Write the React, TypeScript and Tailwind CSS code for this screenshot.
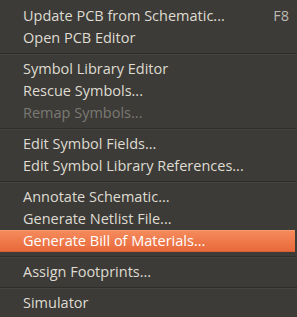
type Item = { label: string; shortcut?: string; disabled?: boolean; active?: boolean };

const groups: Item[][] = [
  [{ label: "Update PCB from Schematic...", shortcut: "F8" }, { label: "Open PCB Editor" }],
  [{ label: "Symbol Library Editor" }, { label: "Rescue Symbols..." }, { label: "Remap Symbols...", disabled: true }],
  [{ label: "Edit Symbol Fields..." }, { label: "Edit Symbol Library References..." }],
  [{ label: "Annotate Schematic..." }, { label: "Generate Netlist File..." }, { label: "Generate Bill of Materials...", active: true }],
  [{ label: "Assign Footprints..." }],
  [{ label: "Simulator" }],
];

function Row({ item }: { item: Item }) {
  if (item.active) {
    return (
      <div className="h-[22px] mr-[2px] flex items-center pl-[23px] pr-[8px] text-white bg-gradient-to-b from-[#f58a5b] to-[#e8693b] border-t border-[#f89c74] border-b border-b-[#d85f31]">
        <span>{item.label}</span>
      </div>
    );
  }
  return (
    <div
      className={
        "h-[22px] flex items-center justify-between pl-[23px] pr-[8px] " +
        (item.disabled ? "text-[#7b7973]" : "text-[#dfdbd2]")
      }
    >
      <span>{item.label}</span>
      {item.shortcut && <span className="text-[#bdb9b1]">{item.shortcut}</span>}
    </div>
  );
}

export default function App() {
  return (
    <div
      className="w-[297px] h-[317px] bg-[#3c3b37] pt-[5px] text-[14.5px] leading-none overflow-hidden"
      style={{ fontFamily: '"Open Sans", "DejaVu Sans", sans-serif' }}
    >
      {groups.map((g, i) => (
        <div key={i}>
          {i > 0 && (
            <div className="h-[9px] flex flex-col justify-center">
              <div className="h-px bg-[#2e2d2a]" />
              <div className="h-px bg-[#45443f]" />
            </div>
          )}
          {g.map((item) => (
            <Row key={item.label} item={item} />
          ))}
        </div>
      ))}
    </div>
  );
}
